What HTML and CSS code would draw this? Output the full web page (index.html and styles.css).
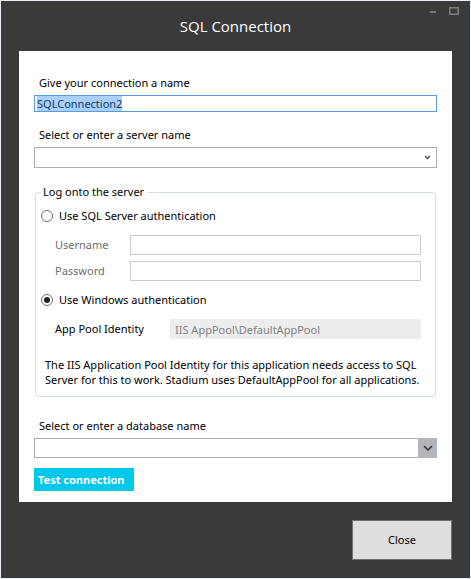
FILE: index.html
```html
<!DOCTYPE html>
<html lang="en">
<head>
<meta charset="utf-8">
<title>SQL Connection</title>
<link rel="stylesheet" href="styles.css">
</head>
<body>
<main class="dialog">
  <header class="titlebar">
    <h1 class="title">SQL Connection</h1>
    <div class="window-controls">
      <button class="window-button" type="button" aria-label="Minimize">
        <svg width="10" height="8" viewBox="0 0 10 8"><path d="M2 4h6v2H2z" fill="#777"/></svg>
      </button>
      <button class="window-button" type="button" aria-label="Maximize">
        <svg width="10" height="8" viewBox="0 0 10 8"><rect x=".75" y=".75" width="8.500" height="6.500" fill="none" stroke="#808080" stroke-width="1.500"/></svg>
      </button>
    </div>
  </header>

  <form class="panel">
    <div class="field">
      <label class="label" for="name">Give your connection a name</label>
      <input class="input input-name" id="name" type="text" value="SQLConnection2">
    </div>
    <div class="field">
      <label class="label" for="server">Select or enter a server name</label>
      <div class="combo">
        <select class="select select-server" id="server"><option></option></select>
        <span class="arrow arrow-plain">
          <svg width="7" height="6" viewBox="0 0 7 6"><path d="M1 1l2.500 2.500L6 1" fill="none" stroke="#555" stroke-width="1.500"/></svg>
        </span>
      </div>
    </div>

    <fieldset class="group">
      <legend class="legend">Log onto the server</legend>
      <label class="choice"><input class="radio" type="radio" name="auth">Use SQL Server authentication</label>
      <div class="credentials">
        <label class="muted" for="username">Username</label>
        <input class="input input-disabled" id="username" type="text" disabled>
        <label class="muted" for="password">Password</label>
        <input class="input input-disabled" id="password" type="password" disabled>
      </div>
      <label class="choice"><input class="radio" type="radio" name="auth" checked>Use Windows authentication</label>
      <div class="identity">
        <label for="identity">App Pool Identity</label>
        <input class="input input-readonly" id="identity" type="text" value="IIS AppPool\DefaultAppPool" readonly>
      </div>
      <p class="note">The IIS Application Pool Identity for this application needs access to SQL Server for this to work. Stadium uses DefaultAppPool for all applications.</p>
    </fieldset>

    <div class="field">
      <label class="label" for="database">Select or enter a database name</label>
      <div class="combo">
        <select class="select select-database" id="database"><option></option></select>
        <span class="arrow arrow-filled">
          <svg width="10" height="6" viewBox="0 0 10 6"><path d="M1 1l4 4 4-4" fill="none" stroke="#333" stroke-width="1.500"/></svg>
        </span>
      </div>
    </div>
    <button class="test" type="button">Test connection</button>
  </form>

  <footer class="footer">
    <button class="close" type="button">Close</button>
  </footer>
</main>
<script src="script.js"></script>
</body>
</html>
```
FILE: styles.css
```css
* {
  box-sizing: border-box;
}

body {
  margin: 0;
  padding: 1px;
  background: #eaf0f6;
  color: #000;
  font: 11px/16px "Noto Sans", sans-serif;
}

button,
input,
select {
  margin: 0;
  font: inherit;
}

.dialog {
  padding: 0 18px;
  background: #3a3a3a;
}

.titlebar {
  position: relative;
  padding: 14px 0;
}

.title {
  margin: 0;
  color: #fff;
  font-family: "Open Sans", sans-serif;
  font-size: 15px;
  font-weight: 400;
  line-height: 22px;
  text-align: center;
}

.window-controls {
  position: absolute;
  top: 6px;
  right: -7px;
  display: flex;
  gap: 11px;
}

.window-button {
  display: block;
  padding: 0;
  border: 0;
  background: none;
}

.window-button svg {
  display: block;
}

.panel {
  padding: 24px 15px 11px;
  background: #fff;
}

.field {
  display: flex;
  flex-direction: column;
  gap: 4px;
  margin-bottom: 15px;
}

.label {
  padding-left: 5px;
}

.input {
  width: 100%;
  min-width: 0;
  height: 20px;
  padding: 0 4px;
  border: 1px solid #ccc;
  border-radius: 0;
  outline: 0;
  background: #fff;
}

.input-name {
  height: 17px;
  padding: 0 2px;
  border-color: #569de5;
  color: #000;
}

.input-name::selection {
  background: #a9d1fb;
  color: #143a66;
}

.combo {
  position: relative;
}

.select {
  display: block;
  width: 100%;
  height: 21px;
  padding: 0 22px 0 3px;
  appearance: none;
  border: 1px solid #abadb3;
  border-radius: 0;
  background: #fff;
}

.select-database {
  height: 20px;
}

.arrow {
  position: absolute;
  top: 0;
  right: 0;
  bottom: 0;
  display: flex;
  align-items: center;
  justify-content: center;
  width: 19px;
  pointer-events: none;
}

.arrow-filled {
  background: #b2b6bb;
}

.group {
  margin: 16px 1px 21px;
  padding: 8px 14px 9px 5px;
  border: 1px solid #d5dfe5;
  border-radius: 3px;
}

.legend {
  padding: 0 4px 0 2px;
}

.choice {
  display: flex;
  align-items: center;
  gap: 6px;
}

.radio {
  display: grid;
  place-items: center;
  width: 12px;
  height: 12px;
  appearance: none;
  border: 1px solid #707070;
  border-radius: 50%;
  background: #fff;
}

.radio:checked::before {
  width: 6px;
  height: 6px;
  border-radius: 50%;
  background: #212121;
  content: "";
}

.credentials,
.identity {
  display: grid;
  grid-template-columns: 75px 1fr;
  row-gap: 6px;
  align-items: center;
  margin: 11px 0;
  padding-left: 14px;
}

.identity {
  grid-template-columns: 115px 1fr;
}

.muted {
  color: #6d6d6d;
}

.input-readonly {
  border-color: #ededed;
  background: #ededed;
  color: #838383;
}

.note {
  margin: 18px -10px 0 4px;
  line-height: 15px;
}

.test {
  display: block;
  height: 23px;
  margin-top: -5px;
  padding: 0 10px 0 4px;
  border: 0;
  background: #00c8eb;
  color: #fff;
  font-weight: 700;
}

.footer {
  display: flex;
  justify-content: flex-end;
  padding: 18px 0;
}

.close {
  width: 100px;
  height: 40px;
  border: 1px solid #707070;
  background: #ddd;
}
```
FILE: script.js
```js
document.getElementById("name").select();
```
